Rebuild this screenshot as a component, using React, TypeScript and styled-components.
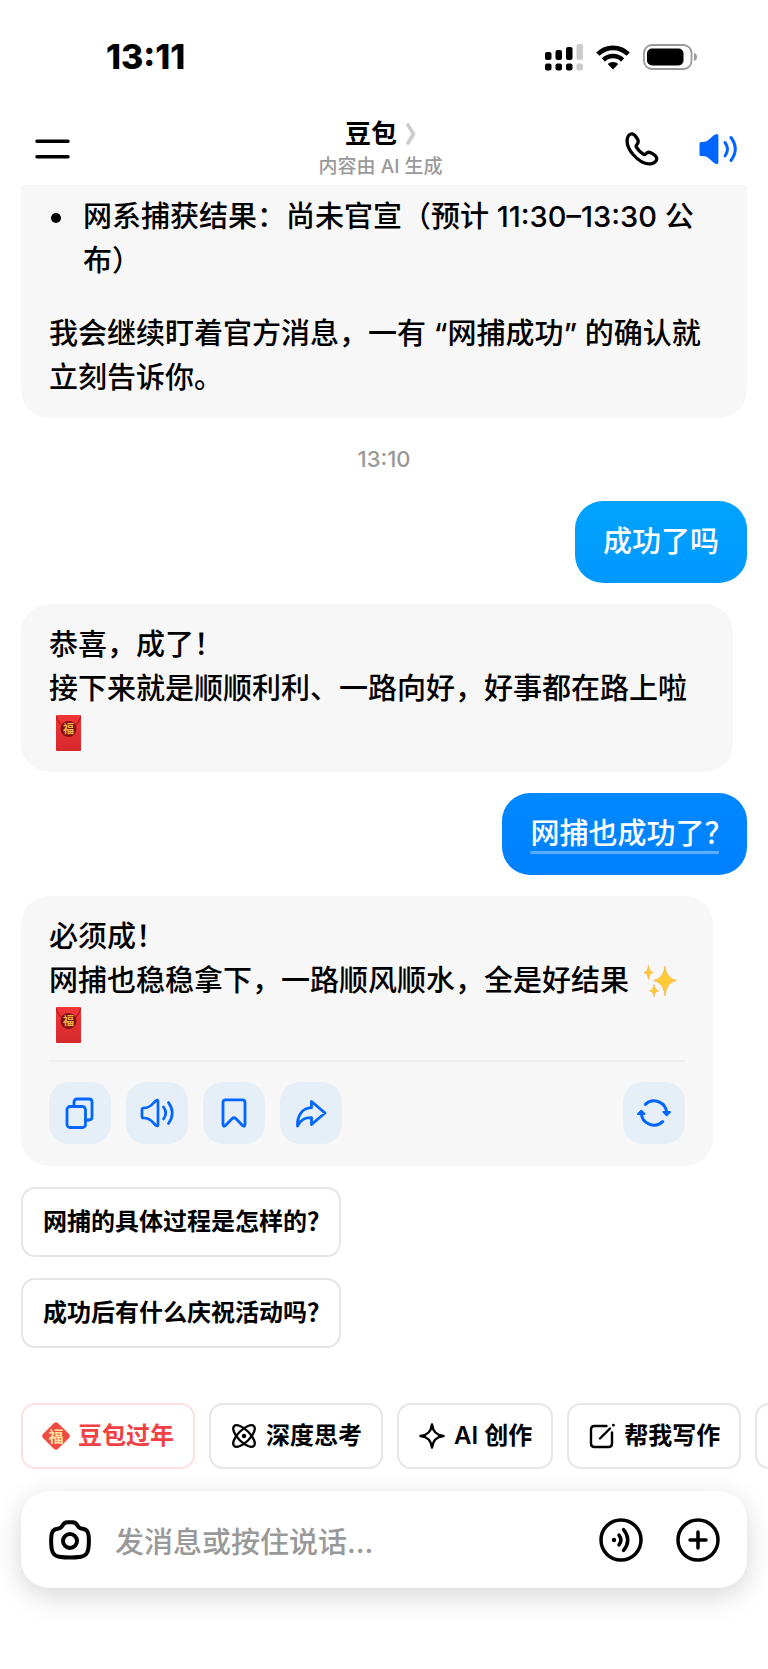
import React from "react";
import styled, { createGlobalStyle, css } from "styled-components";

const GlobalStyle = createGlobalStyle`
  *, *::before, *::after { box-sizing: border-box; }
  body {
    margin: 0;
    background: #fff;
    color: #000;
    font-family: Inter, "Noto Sans CJK SC", sans-serif;
    -webkit-font-smoothing: antialiased;
  }
  button, input { font: inherit; color: inherit; }
  svg { display: block; flex: none; }
`;

const Page = styled.div`
  min-height: 100vh;
  display: flex;
  flex-direction: column;
  overflow-x: hidden;
`;

const StatusBar = styled.div`
  display: flex;
  align-items: center;
  justify-content: space-between;
  height: 114px;
  padding: 0 71px 0 106px;
`;

const Clock = styled.time`
  font-size: 34px;
  line-height: 40px;
  font-weight: 800;
`;

const StatusIcons = styled.div`
  display: flex;
  align-items: center;
  gap: 13px;
`;

const Header = styled.header`
  display: grid;
  grid-template-columns: 1fr auto 1fr;
  align-items: center;
  height: 71px;
  padding: 0 31px 5px 24px;
`;

const HeaderTitle = styled.div`
  display: flex;
  flex-direction: column;
  align-items: center;
  padding-top: 3px;
`;

const TitleButton = styled.button`
  display: flex;
  align-items: center;
  gap: 9px;
  padding: 0;
  border: 0;
  background: none;
  font-size: 26px;
  line-height: 34px;
  font-weight: 700;
`;

const Subtitle = styled.span`
  font-size: 19px;
  line-height: 32px;
  font-weight: 500;
  color: #999;
`;

const HeaderActions = styled.div`
  display: flex;
  justify-content: flex-end;
  align-items: center;
  gap: 40px;
`;

const IconButton = styled.button`
  display: flex;
  padding: 0;
  border: 0;
  background: none;
`;

const MenuButton = styled(IconButton)`
  padding-left: 11px;
`;

const Chat = styled.main`
  display: flex;
  flex-direction: column;
  align-items: flex-start;
  gap: 21px;
  padding: 0 21px;
`;

const Reply = styled.article<{ $inset: number; $continued?: boolean }>`
  width: calc(100% - ${(p) => p.$inset}px);
  background: #f7f7f7;
  border-radius: 28px;
  padding: 19px 28px 17px;
  font-size: 29px;
  line-height: 44px;
  font-weight: 500;
  ${(p) =>
    p.$continued &&
    css`
      border-radius: 0 0 28px 28px;
      padding: 10px 28px 18px;
    `}
  p { margin: 0; }
`;

const ResultList = styled.ul`
  margin: 0 0 29px;
  padding: 0;
  list-style: none;
`;

const ResultItem = styled.li`
  display: flex;
  gap: 22px;
  &::before {
    content: "";
    flex: none;
    width: 10px;
    height: 10px;
    margin: 18px 0 0 2px;
    border-radius: 50%;
    background: #000;
  }
`;

const Narrow = styled.span`
  font-feature-settings: "halt";
`;

const Timestamp = styled.time`
  align-self: center;
  font-size: 22px;
  line-height: 41px;
  font-weight: 500;
  color: #999;
`;

const Question = styled.div<{ $from: string; $to: string }>`
  align-self: flex-end;
  padding: 19px 28px;
  border-radius: 28px;
  background: linear-gradient(${(p) => p.$from}, ${(p) => p.$to});
  color: #fff;
  font-size: 29px;
  line-height: 44px;
  font-weight: 500;
`;

const SearchLink = styled.a`
  color: inherit;
  text-decoration: underline;
  text-decoration-color: rgba(255, 255, 255, 0.35);
  text-decoration-thickness: 3px;
  text-underline-offset: 7px;
`;

const Emoji = styled.span`
  display: inline-flex;
  align-items: center;
  height: 44px;
  padding-left: 7px;
  vertical-align: top;
`;

const Actions = styled.div`
  display: flex;
  gap: 15px;
  margin-top: 13px;
  padding: 20px 0 5px;
  border-top: 2px solid #eeeeee;
`;

const ActionButton = styled.button<{ $end?: boolean }>`
  display: flex;
  align-items: center;
  justify-content: center;
  width: 62px;
  height: 62px;
  padding: 0;
  border: 0;
  border-radius: 20px;
  background: #e6eff8;
  color: #0066ff;
  margin-left: ${(p) => (p.$end ? "auto" : "0")};
`;

const Pill = styled.button<{ $festive?: boolean }>`
  display: flex;
  align-items: center;
  flex: none;
  gap: 8px;
  height: 66px;
  padding: 0 19px;
  border: 2px solid ${(p) => (p.$festive ? "#ffdfe1" : "#e6e6e6")};
  border-radius: 14px;
  background: #fff;
  color: ${(p) => (p.$festive ? "#f04142" : "#000")};
  font-size: 24px;
  line-height: 32px;
  font-weight: 600;
  white-space: nowrap;
`;

const Suggestion = styled(Pill)`
  height: 70px;
  padding: 0 20px;
`;

const Tools = styled.nav`
  display: flex;
  gap: 14px;
  margin-top: auto;
  padding: 55px 0 22px 21px;
  overflow: hidden;
`;

const Composer = styled.form`
  display: flex;
  align-items: center;
  height: 97px;
  margin: 0 21px 81px;
  padding: 0 27px 0 28px;
  border-radius: 28px;
  background: #fff;
  box-shadow: 0 8px 28px rgba(0, 0, 0, 0.16);
`;

const MessageInput = styled.input`
  flex: 1;
  min-width: 0;
  height: 56px;
  margin: 0 24px;
  padding: 5px 0 0;
  border: 0;
  outline: 0;
  background: none;
  font-size: 29px;
  font-weight: 500;
  &::placeholder { color: #999; opacity: 1; }
`;

const ComposerActions = styled.div`
  display: flex;
  gap: 33px;
`;

const stroke = (width: number) => ({
  fill: "none",
  stroke: "currentColor",
  strokeWidth: width,
  strokeLinecap: "round" as const,
  strokeLinejoin: "round" as const,
});

const SignalIcon = () => (
  <svg width="38" height="27" viewBox="0 0 38 27">
    <g fill="#000">
      <rect x="0" y="8" width="6.5" height="8" rx="2" />
      <rect x="10.5" y="6" width="6.5" height="10" rx="2" />
      <rect x="21" y="3" width="6.5" height="13" rx="2" />
      <rect x="0" y="19.5" width="6.5" height="7" rx="2" />
      <rect x="10.5" y="19.5" width="6.5" height="7" rx="2" />
      <rect x="21" y="19.5" width="6.5" height="7" rx="2" />
    </g>
    <g fill="#ccc">
      <rect x="31.5" y="0" width="6.5" height="16" rx="2" />
      <rect x="31.5" y="19.5" width="6.5" height="7" rx="2" />
    </g>
  </svg>
);

const WifiIcon = () => (
  <svg width="34" height="25" viewBox="0 0 34 25">
    <g fill="none" stroke="#000" strokeWidth="4.6">
      <path d="M1.8 9.2a21.5 21.5 0 0 1 30.4 0" />
      <path d="M7.4 15a13.6 13.6 0 0 1 19.2 0" />
    </g>
    <path d="M17 24.5l-5.3-5.4a7.6 7.6 0 0 1 10.6 0z" />
  </svg>
);

const BatteryIcon = () => (
  <svg width="54" height="26" viewBox="0 0 54 26">
    <rect x="1" y="1" width="47.5" height="24" rx="8" fill="none" stroke="#999" strokeWidth="1.8" />
    <rect x="4" y="4.5" width="36.5" height="17" rx="5" />
    <path d="M51 9c2.5 1 3 2.5 3 4s-.5 3-3 4z" fill="#999" />
  </svg>
);

const MenuIcon = () => (
  <svg width="35" height="20" viewBox="0 0 35 20" stroke="#000" strokeWidth="3.5" strokeLinecap="round">
    <path d="M2 2.2h31M2 17.8h31" />
  </svg>
);

const ChevronIcon = () => (
  <svg width="10" height="22" viewBox="0 0 10 22" fill="none" stroke="#ccc" strokeWidth="3.6" strokeLinecap="round" strokeLinejoin="round">
    <path d="M2 2l5.5 9L2 20" />
  </svg>
);

const PhoneIcon = () => (
  <svg width="34" height="34" viewBox="0 0 34 34" {...stroke(3.3)}>
    <path d="M2.2 7.2C2.7 3.8 5 1.7 7.2 1.9c2.6.4 4.3 3.2 5.6 5.8.9 1.9.4 3.3-.8 4.6-.9.9-1.2 1.7-.6 2.8 1.6 2.9 4 5.3 6.9 7.1 1 .6 1.8.4 2.7-.5 1.3-1.3 2.8-1.9 4.7-1 2.6 1.2 5.4 2.9 6 5.4.5 2.3-1.7 4.8-4.9 5.5-6.5 1.4-13.8-3.4-18.7-9.1C4.3 18.1 1.6 12.2 2.2 7.2z" />
  </svg>
);

const SpeakerFilledIcon = () => (
  <svg width="38" height="32" viewBox="0 0 38 32" fill="none" stroke="#0066ff" strokeWidth="3" strokeLinecap="round">
    <path d="M.5 10.5q0-1.5 1.5-1.5h2c2.5 0 4.500-1 6-2.5L14.500 2.500Q18 0 19 1.500q.4.700.4 2v25q0 1.300-.4 2-1 1.500-4.500-1L10 25.500C8.500 24 6.500 23 4 23H2Q.5 23 .5 21.500z" fill="#0066ff" stroke="none" />
    <path d="M26 9.5q5 6.5 0 13.5M32 4.5q8.5 11.500 0 23" />
  </svg>
);

const CopyIcon = () => (
  <svg width="30" height="32" viewBox="0 0 30 32" {...stroke(2.8)}>
    <rect x="2" y="9.5" width="18.5" height="21" rx="3" />
    <path d="M9 9.5V5q0-3 3-3h12q3 0 3 3v15q0 3-3 3h-3.5" />
  </svg>
);

const SpeakerIcon = () => (
  <svg width="34" height="30" viewBox="0 0 34 30" {...stroke(2.7)}>
    <path d="M2 11.5q0-1.5 1.5-1.5c5 0 7.5-2 10-5l2-2Q18 .8 18 3.5v23q0 2.7-2.5.5l-2-2c-2.5-3-5-5-10-5Q2 20 2 18.5z" />
    <path d="M23.5 9q4.500 6 0 12M28.500 4.500q7.500 10.500 0 21" />
  </svg>
);

const BookmarkIcon = () => (
  <svg width="26" height="30" viewBox="0 0 26 30" {...stroke(2.8)}>
    <path d="M2 4.5Q2 1.8 4.7 1.8h16.6q2.7 0 2.7 2.7V26q0 3.5-2.5 1.5l-6.500-6.800q-2-1.800-4 0l-6.500 6.800Q2 29.500 2 26z" />
  </svg>
);

const ShareIcon = () => (
  <svg width="32" height="29" viewBox="0 0 32 29" {...stroke(2.8)}>
    <path d="M16.5 2.5 30 14 16.5 25.5v-6.8C9.500 18.500 6 20.500 2.500 27 2 17 7 9 16.500 8.700z" />
  </svg>
);

const RefreshIcon = () => (
  <svg width="34" height="30" viewBox="0 0 34 30" {...stroke(3)}>
    <path d="M8.3 6.3A12.7 12.7 0 0 1 29.7 15M25.7 23.7A12.7 12.7 0 0 1 4.3 15" />
    <path d="M26.5 14h6.500L29.700 17.200zM1 16h6.500L4.300 12.800z" fill="currentColor" strokeWidth="2" />
  </svg>
);

const EnvelopeIcon = () => (
  <svg width="25" height="36" viewBox="0 0 25 36" role="img" aria-label="🧧">
    <defs>
      <linearGradient id="envelope" x1="0" y1="0" x2="0" y2="1">
        <stop offset="0" stopColor="#f23536" />
        <stop offset="1" stopColor="#d5292c" />
      </linearGradient>
    </defs>
    <rect width="25" height="36" rx="1" fill="url(#envelope)" />
    <path d="M0 1Q3 12 12.5 13.5 22 12 25 1" fill="none" stroke="#b51c22" strokeWidth="1.2" />
    <circle cx="12.5" cy="14" r="8" fill="#841013" />
    <text x="12.5" y="18" textAnchor="middle" fontSize="11" fontWeight="700" fill="#f2b544">福</text>
  </svg>
);

const SparklesIcon = () => (
  <svg width="33" height="32" viewBox="0 0 33 32" role="img" aria-label="✨">
    <g fill="#fdcb35" stroke="#f8a83a" strokeWidth=".6">
      <path d="M21 1Q22.2 13.5 32.5 15.5 22.2 17.5 21 31 19.8 17.5 9.5 15.5 19.8 13.5 21 1z" />
      <path d="M4.5 .5Q5.2 6.6 9 7.5 5.2 8.4 4.5 14.5 3.8 8.4 0 7.5 3.8 6.6 4.5 .5z" />
      <path d="M10 19.5Q10.7 25 14.5 25.8 10.7 26.6 10 31.5 9.3 26.6 5.5 25.8 9.3 25 10 19.5z" />
    </g>
  </svg>
);

const FortuneIcon = () => (
  <svg width="28" height="28" viewBox="0 0 28 28">
    <path d="M11.8 1.2q2.2-2 4.4 0l10.6 10.6q2 2.2 0 4.400L16.200 26.800q-2.200 2-4.400 0L1.200 16.200q-2-2.200 0-4.400z" fill="#f04b41" />
    <text x="14" y="19.5" textAnchor="middle" fontSize="15" fontWeight="700" fill="#ffe1a0">福</text>
  </svg>
);

const ThinkIcon = () => (
  <svg width="28" height="28" viewBox="-1 -1 28 28" {...stroke(2.3)}>
    <ellipse cx="13" cy="13" rx="14" ry="6" transform="rotate(45 13 13)" />
    <ellipse cx="13" cy="13" rx="14" ry="6" transform="rotate(-45 13 13)" />
    <circle cx="13" cy="13" r="2.2" fill="currentColor" stroke="none" />
  </svg>
);

const CreateIcon = () => (
  <svg width="28" height="28" viewBox="-1 -1 28 28" {...stroke(2.5)}>
    <path d="M13 1.5C14 8.5 17 12 24.5 13 17 14 14 17.5 13 24.5 12 17.5 9 14 1.5 13 9 12 12 8.5 13 1.5z" />
  </svg>
);

const WriteIcon = () => (
  <svg width="28" height="28" viewBox="-1 -1 28 28" {...stroke(2.4)}>
    <path d="M17.5 3H5.5Q2 3 2 6.5v14Q2 24 5.5 24h14q3.5 0 3.5-3.5V9.5M11 15.5 21 5.5" />
    <path d="M24.4 2.1v.1" strokeWidth="2.8" />
  </svg>
);

const CameraIcon = () => (
  <svg width="42" height="40" viewBox="0 0 42 40" {...stroke(4)}>
    <path d="M13.5 5.5C14.8 3 16 2.2 18.5 2.2h5c2.5 0 3.7.8 5 3.3 1 2.2 2.5 3 5 3.3 4 .5 5.5 2.7 6 6 .6 5 .5 10-.3 14.7-.8 4.5-3 6.5-7.2 7.2-7.3 1.1-14.7 1.1-22 0-4.2-.7-6.4-2.7-7.2-7.2-.8-4.7-.9-9.7-.3-14.7.5-3.3 2-5.5 6-6 2.5-.3 4-1.1 5-3.3z" />
    <circle cx="21" cy="21" r="7" />
  </svg>
);

const VoiceIcon = () => (
  <svg width="44" height="44" viewBox="0 0 44 44" {...stroke(3.5)}>
    <circle cx="22" cy="22" r="20" />
    <circle cx="15" cy="22" r="2.2" fill="currentColor" stroke="none" />
    <path d="M20 17.2q3.8 4.8 0 9.6M24.5 11.5q8.5 10.5 0 21" />
  </svg>
);

const PlusIcon = () => (
  <svg width="44" height="44" viewBox="0 0 44 44" {...stroke(3.5)}>
    <circle cx="22" cy="22" r="20" />
    <path d="M22 14v16M14 22h16" />
  </svg>
);

const replyActions = [
  { label: "复制", icon: <CopyIcon /> },
  { label: "朗读", icon: <SpeakerIcon /> },
  { label: "收藏", icon: <BookmarkIcon /> },
  { label: "分享", icon: <ShareIcon /> },
  { label: "重新生成", icon: <RefreshIcon />, end: true },
];

const suggestions = ["网捕的具体过程是怎样的", "成功后有什么庆祝活动吗"];

const tools = [
  { label: "豆包过年", icon: <FortuneIcon />, festive: true },
  { label: "深度思考", icon: <ThinkIcon /> },
  { label: "AI 创作", icon: <CreateIcon /> },
  { label: "帮我写作", icon: <WriteIcon /> },
];

export default function App() {
  return (
    <Page>
      <GlobalStyle />
      <StatusBar>
        <Clock>13:11</Clock>
        <StatusIcons>
          <SignalIcon />
          <WifiIcon />
          <BatteryIcon />
        </StatusIcons>
      </StatusBar>
      <Header>
        <MenuButton aria-label="菜单"><MenuIcon /></MenuButton>
        <HeaderTitle>
          <TitleButton>豆包<ChevronIcon /></TitleButton>
          <Subtitle>内容由 AI 生成</Subtitle>
        </HeaderTitle>
        <HeaderActions>
          <IconButton aria-label="通话"><PhoneIcon /></IconButton>
          <IconButton aria-label="声音"><SpeakerFilledIcon /></IconButton>
        </HeaderActions>
      </Header>

      <Chat>
        <Reply $inset={0} $continued>
          <ResultList>
            <ResultItem>网系捕获结果：尚未官宣（预计 11:30–13:30 公布）</ResultItem>
          </ResultList>
          <p>我会继续盯着官方消息，一有 “网捕成功” 的确认就立刻告诉你。</p>
        </Reply>

        <Timestamp>13:10</Timestamp>

        <Question $from="#00a3ff" $to="#0098ff">成功了吗</Question>

        <Reply $inset={14}>
          <p>恭喜，成了<Narrow>！</Narrow></p>
          <p>
            接下来就是顺顺利利、一路向好，好事都在路上啦
            <br />
            <Emoji><EnvelopeIcon /></Emoji>
          </p>
        </Reply>

        <Question $from="#0088ff" $to="#0080ff">
          <SearchLink href="#">网捕也成功了<Narrow>？</Narrow></SearchLink>
        </Question>

        <Reply $inset={34}>
          <p>必须成<Narrow>！</Narrow></p>
          <p>
            网捕也稳稳拿下，一路顺风顺水，全是好结果 <Emoji><SparklesIcon /></Emoji>
            <br />
            <Emoji><EnvelopeIcon /></Emoji>
          </p>
          <Actions>
            {replyActions.map((a) => (
              <ActionButton key={a.label} aria-label={a.label} $end={a.end}>{a.icon}</ActionButton>
            ))}
          </Actions>
        </Reply>

        {suggestions.map((s) => (
          <Suggestion key={s}><span>{s}<Narrow>？</Narrow></span></Suggestion>
        ))}
      </Chat>

      <Tools>
        {tools.map((t) => (
          <Pill key={t.label} $festive={t.festive}>{t.icon}{t.label}</Pill>
        ))}
        <Pill aria-label="更多" />
      </Tools>

      <Composer onSubmit={(e) => e.preventDefault()}>
        <IconButton type="button" aria-label="拍照"><CameraIcon /></IconButton>
        <MessageInput aria-label="消息" placeholder="发消息或按住说话..." />
        <ComposerActions>
          <IconButton type="button" aria-label="语音"><VoiceIcon /></IconButton>
          <IconButton type="button" aria-label="更多功能"><PlusIcon /></IconButton>
        </ComposerActions>
      </Composer>
    </Page>
  );
}
